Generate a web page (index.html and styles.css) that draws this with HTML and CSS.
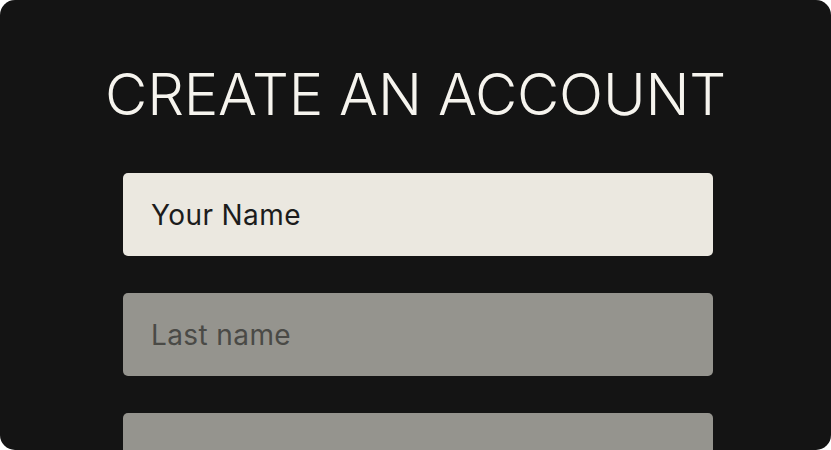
FILE: index.html
```html
<!DOCTYPE html>
<html lang="en">
<head>
<meta charset="utf-8">
<title>Create an account</title>
<link rel="stylesheet" href="styles.css">
</head>
<body>
<main class="card">
  <h1 class="title">CREATE AN ACCOUNT</h1>
  <form class="form">
    <div class="field field-active">Your Name</div>
    <div class="field field-muted">Last name</div>
    <div class="field field-muted"></div>
  </form>
</main>
</body>
</html>
```

FILE: styles.css
```css
html, body {
  margin: 0;
  padding: 0;
  background: #ffffff;
}
body {
  width: 831px;
  height: 450px;
  overflow: hidden;
}
.card {
  box-sizing: border-box;
  width: 831px;
  height: 450px;
  background: #141414;
  border-radius: 15px;
  overflow: hidden;
  display: flex;
  flex-direction: column;
  align-items: center;
  padding-top: 61px;
}
.title {
  margin: 0;
  font-family: Inter, "Liberation Sans", sans-serif;
  font-weight: 300;
  font-size: 58px;
  line-height: 66px;
  color: #f6f4ee;
  letter-spacing: -0.2px;
}
.form {
  margin-top: 46px;
  margin-left: 5px;
  display: flex;
  flex-direction: column;
  gap: 37px;
}
.field {
  box-sizing: border-box;
  width: 590px;
  height: 83px;
  border-radius: 5px;
  padding-left: 28px;
  display: flex;
  align-items: center;
  font-family: Inter, "Liberation Sans", sans-serif;
  font-size: 28px;
  font-weight: 400;
  letter-spacing: 0.4px;
  flex-shrink: 0;
}
.field-active {
  background: #ebe8e0;
  color: #1c1c1c;
}
.field-muted {
  background: #95948e;
  color: #4a4a46;
}
```
